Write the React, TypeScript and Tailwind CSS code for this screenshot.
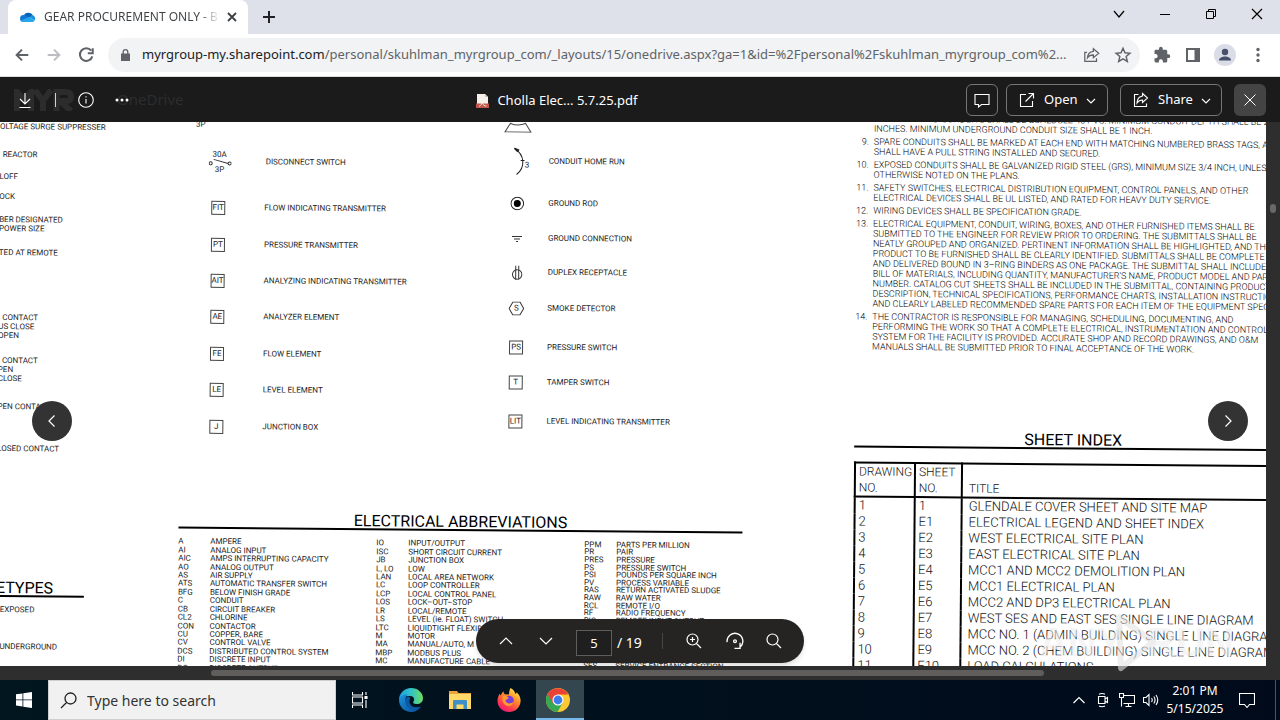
import React from "react";
import type { ReactNode } from "react";

type Mark = { text: string; gap: string };

const leftMarks: Mark[] = [
  { text: "OLTAGE SURGE SUPPRESSER", gap: "mt-0" },
  { text: "REACTOR", gap: "mt-[19px] pl-[3px]" },
  { text: "LOFF", gap: "mt-[13px]" },
  { text: "OCK", gap: "mt-[11px]" },
  { text: "BER DESIGNATED", gap: "mt-[14px]" },
  { text: "POWER SIZE", gap: "mt-0" },
  { text: "TED AT REMOTE", gap: "mt-[15px]" },
  { text: "CONTACT", gap: "mt-[56px] pl-[4px]" },
  { text: "US CLOSE", gap: "mt-0" },
  { text: "OPEN", gap: "mt-0" },
  { text: "CONTACT", gap: "mt-[16px] pl-[4px]" },
  { text: "PEN", gap: "mt-0" },
  { text: "CLOSE", gap: "mt-0" },
  { text: "PEN CONTACT", gap: "mt-[19px]" },
  { text: "LOSED CONTACT", gap: "mt-[33px]" },
];

const tagLegend: [string, string][] = [
  ["FIT", "FLOW INDICATING TRANSMITTER"],
  ["PT", "PRESSURE TRANSMITTER"],
  ["AIT", "ANALYZING INDICATING TRANSMITTER"],
  ["AE", "ANALYZER ELEMENT"],
  ["FE", "FLOW ELEMENT"],
  ["LE", "LEVEL ELEMENT"],
  ["J", "JUNCTION BOX"],
];

const abbreviations: [string, string][][] = [
  [
    ["A", "AMPERE"],
    ["AI", "ANALOG INPUT"],
    ["AIC", "AMPS INTERRUPTING CAPACITY"],
    ["AO", "ANALOG OUTPUT"],
    ["AS", "AIR SUPPLY"],
    ["ATS", "AUTOMATIC TRANSFER SWITCH"],
    ["BFG", "BELOW FINISH GRADE"],
    ["C", "CONDUIT"],
    ["CB", "CIRCUIT BREAKER"],
    ["CL2", "CHLORINE"],
    ["CON", "CONTACTOR"],
    ["CU", "COPPER, BARE"],
    ["CV", "CONTROL VALVE"],
    ["DCS", "DISTRIBUTED CONTROL SYSTEM"],
    ["DI", "DISCRETE INPUT"],
    ["DO", "DISCRETE OUTPUT"],
  ],
  [
    ["IO", "INPUT/OUTPUT"],
    ["ISC", "SHORT CIRCUIT CURRENT"],
    ["JB", "JUNCTION BOX"],
    ["L, LO", "LOW"],
    ["LAN", "LOCAL AREA NETWORK"],
    ["LC", "LOOP CONTROLLER"],
    ["LCP", "LOCAL CONTROL PANEL"],
    ["LOS", "LOCK–OUT–STOP"],
    ["LR", "LOCAL/REMOTE"],
    ["LS", "LEVEL (ie. FLOAT) SWITCH"],
    ["LTC", "LIQUIDTIGHT FLEXIBLE"],
    ["M", "MOTOR"],
    ["MA", "MANUAL/AUTO, M"],
    ["MBP", "MODBUS PLUS"],
    ["MC", "MANUFACTURE CABLE"],
    ["MCC", "MOTOR CONTROL CENTER"],
  ],
  [
    ["PPM", "PARTS PER MILLION"],
    ["PR", "PAIR"],
    ["PRES", "PRESSURE"],
    ["PS", "PRESSURE SWITCH"],
    ["PSI", "POUNDS PER SQUARE INCH"],
    ["PV", "PROCESS VARIABLE"],
    ["RAS", "RETURN ACTIVATED SLUDGE"],
    ["RAW", "RAW WATER"],
    ["RCL", "REMOTE I/O"],
    ["RF", "RADIO FREQUENCY"],
    ["RIO", "REMOTE INPUT OUTPUT"],
    ["", ""],
    ["", ""],
    ["", ""],
    ["", ""],
    ["", ""],
    ["SES", "SERVICE ENTRANCE SECTION"],
  ],
];

const notes: { no: string; lines: string[] }[] = [
  {
    no: "8.",
    lines: [
      "UNDERGROUND CONDUITS SHALL BE SCHEDULE 40 PVC. MINIMUM CONDUIT DEPTH SHALL BE 24",
      "INCHES. MINIMUM UNDERGROUND CONDUIT SIZE SHALL BE 1 INCH.",
    ],
  },
  {
    no: "9.",
    lines: [
      "SPARE CONDUITS SHALL BE MARKED AT EACH END WITH MATCHING NUMBERED BRASS TAGS, AND",
      "SHALL HAVE A PULL STRING INSTALLED AND SECURED.",
    ],
  },
  {
    no: "10.",
    lines: [
      "EXPOSED CONDUITS SHALL BE GALVANIZED RIGID STEEL (GRS), MINIMUM SIZE 3/4 INCH, UNLESS",
      "OTHERWISE NOTED ON THE PLANS.",
    ],
  },
  {
    no: "11.",
    lines: [
      "SAFETY SWITCHES, ELECTRICAL DISTRIBUTION EQUIPMENT, CONTROL PANELS, AND OTHER",
      "ELECTRICAL DEVICES SHALL BE UL LISTED, AND RATED FOR HEAVY DUTY SERVICE.",
    ],
  },
  { no: "12.", lines: ["WIRING DEVICES SHALL BE SPECIFICATION GRADE."] },
  {
    no: "13.",
    lines: [
      "ELECTRICAL EQUIPMENT, CONDUIT, WIRING, BOXES, AND OTHER FURNISHED ITEMS SHALL BE",
      "SUBMITTED TO THE ENGINEER FOR REVIEW PRIOR TO ORDERING. THE SUBMITTALS SHALL BE",
      "NEATLY GROUPED AND ORGANIZED. PERTINENT INFORMATION SHALL BE HIGHLIGHTED, AND THE",
      "PRODUCT TO BE FURNISHED SHALL BE CLEARLY IDENTIFIED. SUBMITTALS SHALL BE COMPLETE",
      "AND DELIVERED BOUND IN 3–RING BINDERS AS ONE PACKAGE. THE SUBMITTAL SHALL INCLUDE",
      "BILL OF MATERIALS, INCLUDING QUANTITY, MANUFACTURER'S NAME, PRODUCT MODEL AND PART",
      "NUMBER. CATALOG CUT SHEETS SHALL BE INCLUDED IN THE SUBMITTAL, CONTAINING PRODUCT",
      "DESCRIPTION, TECHNICAL SPECIFICATIONS, PERFORMANCE CHARTS, INSTALLATION INSTRUCTIONS,",
      "AND CLEARLY LABELED RECOMMENDED SPARE PARTS FOR EACH ITEM OF THE EQUIPMENT SPEC",
    ],
  },
  {
    no: "14.",
    lines: [
      "THE CONTRACTOR IS RESPONSIBLE FOR MANAGING, SCHEDULING, DOCUMENTING, AND",
      "PERFORMING THE WORK SO THAT A COMPLETE ELECTRICAL, INSTRUMENTATION AND CONTROL",
      "SYSTEM FOR THE FACILITY IS PROVIDED. ACCURATE SHOP AND RECORD DRAWINGS, AND O&M",
      "MANUALS SHALL BE SUBMITTED PRIOR TO FINAL ACCEPTANCE OF THE WORK.",
    ],
  },
];

const sheets: [string, string, string][] = [
  ["1", "1", "GLENDALE COVER SHEET AND SITE MAP"],
  ["2", "E1", "ELECTRICAL LEGEND AND SHEET INDEX"],
  ["3", "E2", "WEST ELECTRICAL SITE PLAN"],
  ["4", "E3", "EAST ELECTRICAL SITE PLAN"],
  ["5", "E4", "MCC1 AND MCC2 DEMOLITION PLAN"],
  ["6", "E5", "MCC1 ELECTRICAL PLAN"],
  ["7", "E6", "MCC2 AND DP3 ELECTRICAL PLAN"],
  ["8", "E7", "WEST SES AND EAST SES SINGLE LINE DIAGRAM"],
  ["9", "E8", "MCC NO. 1 (ADMIN BUILDING) SINGLE LINE DIAGRAM"],
  ["10", "E9", "MCC NO. 2 (CHEM BUILDING) SINGLE LINE DIAGRAM"],
  ["11", "E10", "LOAD CALCULATIONS"],
];

function CloudLogo() {
  return (
    <svg className="h-[11px] w-4 shrink-0" viewBox="0 1 16 11" aria-hidden="true">
      <path d="M4 4.2A5 5 0 0 1 12.6 4L8.5 7.5z" fill="#0364b8" />
      <path d="M3.6 4a3.6 3.6 0 0 1 2.4.6L10 7 3.5 11A3.5 3.5 0 0 1 3.6 4z" fill="#0f78d4" />
      <path d="M9.5 6.2 12.4 4A3.5 3.5 0 0 1 14.7 9z" fill="#1490df" />
      <path d="M1 9.6 9 6.1l6 3a3 3 0 0 1-2.3 1.9H3.5A3.6 3.6 0 0 1 1 9.6z" fill="#28a8ea" />
    </svg>
  );
}

function Line({ d, size, width = 1, box = 16 }: { d: string; size: string; width?: number; box?: number }) {
  return (
    <svg
      className={size}
      viewBox={`0 0 ${box} ${box}`}
      fill="none"
      stroke="currentColor"
      strokeWidth={width}
      aria-hidden="true"
    >
      <path d={d} />
    </svg>
  );
}

function TabStrip() {
  return (
    <div className="flex h-[34px] shrink-0 items-start justify-between bg-[#dee1e9] pl-2 text-[#202124]">
      <div className="flex h-full items-center">
        <div className="flex h-full w-[240px] items-center rounded-t-lg bg-white pl-3">
          <CloudLogo />
          <span className="ml-2 w-[176px] overflow-hidden bg-gradient-to-r from-[#3c4043] from-88% to-transparent bg-clip-text text-[12px] whitespace-nowrap text-transparent">
            GEAR PROCUREMENT ONLY - BU
          </span>
          <button aria-label="Close tab" className="ml-1 text-[#3c4043]">
            <Line d="M4 4l8 8M12 4l-8 8" size="size-4" width={1.8} />
          </button>
        </div>
        <button aria-label="New tab" className="ml-[13px]">
          <Line d="M8 2v12M2 8h12" size="size-4" width={2} />
        </button>
      </div>
      <div className="flex h-7 items-center text-black">
        <button aria-label="Search tabs" className="flex w-[46px] justify-center">
          <Line d="M3 5l5 6 5-6" size="size-4" width={1.2} />
        </button>
        <button aria-label="Minimize" className="flex w-[46px] justify-center">
          <Line d="M3 8.5h10" size="size-4" />
        </button>
        <button aria-label="Restore" className="flex w-[46px] justify-center">
          <Line d="M3.5 5.5h7v7h-7zM5.5 5.5v-2h7v7h-2" size="size-4" />
        </button>
        <button aria-label="Close window" className="flex w-[46px] justify-center">
          <Line d="M3 3l10 10M13 3L3 13" size="size-4" width={1.2} />
        </button>
      </div>
    </div>
  );
}

function AddressBar() {
  return (
    <div className="flex h-[43px] shrink-0 items-center border-b border-[#dadce0] bg-white pr-[13px] pl-[13px] text-[#5f6368]">
      <button aria-label="Back">
        <Line d="M17 10H4M10 4l-6 6 6 6" size="size-[18px]" width={2.2} box={20} />
      </button>
      <button aria-label="Forward" className="ml-[14px] text-[#bcbec1]">
        <Line d="M3 10h13M10 4l6 6-6 6" size="size-[18px]" width={2.2} box={20} />
      </button>
      <button aria-label="Reload" className="ml-[14px]">
        <Line d="M15.8 5.2A7 7 0 1 0 17 11.5M17.5 2.5v5.5H12" size="size-[18px]" width={2.2} box={20} />
      </button>
      <div className="ml-[13px] flex h-[34px] min-w-0 flex-1 items-center rounded-full bg-[#f1f3f4] pr-2 pl-[13px]">
        <svg className="h-3 w-[9px] shrink-0" viewBox="0 0 9 12" aria-hidden="true">
          <path d="M0 4.5h9V12H0z" fill="#5f6368" />
          <path d="M2.2 5V3a2.3 2.3 0 0 1 4.6 0v2" fill="none" stroke="#5f6368" strokeWidth="1.3" />
        </svg>
        <div className="ml-[12px] min-w-0 flex-1 overflow-hidden text-[13px] whitespace-nowrap">
          <span className="text-[#202124]">myrgroup-my.sharepoint.com</span>
          /personal/skuhlman_myrgroup_com/_layouts/15/onedrive.aspx?ga=1&amp;id=%2Fpersonal%2Fskuhlman_myrgroup_com%2...
        </div>
        <button aria-label="Share this page" className="ml-[10px]">
          <Line
            d="M4.5 7H2v10h13v-3.5M11.5 3l6 5-6 5v-3c-3 0-5 .8-6.5 3 .3-4 2.5-6.5 6.5-7z"
            size="size-[18px]"
            width={1.4}
            box={20}
          />
        </button>
        <button aria-label="Bookmark" className="ml-[13px]">
          <Line
            d="M10 2.5l2.2 5.1 5.5.5-4.2 3.6 1.3 5.4L10 14.2l-4.8 2.9 1.3-5.4L2.3 8.1l5.5-.5z"
            size="size-[18px]"
            width={1.6}
            box={20}
          />
        </button>
      </div>
      <button aria-label="Extensions" className="ml-[13px]">
        <svg className="size-[18px]" viewBox="0 0 24 24" fill="currentColor" aria-hidden="true">
          <path d="M20.5 11H19V7c0-1.100-.9-2-2-2h-4V3.500a2.500 2.500 0 0 0-5 0V5H4c-1.100 0-2 .9-2 2v3.800h1.500a2.700 2.700 0 0 1 0 5.400H2V20c0 1.100.9 2 2 2h3.800v-1.500a2.700 2.700 0 0 1 5.400 0V22H17c1.100 0 2-.9 2-2v-4h1.500a2.500 2.500 0 0 0 0-5z" />
        </svg>
      </button>
      <button aria-label="Side panel" className="ml-[15px]">
        <svg className="size-[14px]" viewBox="0 0 14 14" aria-hidden="true">
          <path d="M1 1h12v12H1z" fill="none" stroke="#5f6368" strokeWidth="2" />
          <path d="M8.500 1H13v12H8.500z" fill="#5f6368" />
        </svg>
      </button>
      <button aria-label="Profile" className="ml-[14px]">
        <svg className="size-[22px]" viewBox="0 0 22 22" aria-hidden="true">
          <circle cx="11" cy="11" r="11" fill="#dadce8" />
          <circle cx="11" cy="8" r="3.2" fill="#474f6b" />
          <path d="M5 16.500c0-3 3.500-4 6-4s6 1 6 4z" fill="#474f6b" />
        </svg>
      </button>
      <button aria-label="Menu" className="ml-[13px]">
        <svg className="size-[18px]" viewBox="0 0 18 18" fill="currentColor" aria-hidden="true">
          <circle cx="9" cy="3.5" r="1.7" />
          <circle cx="9" cy="9" r="1.7" />
          <circle cx="9" cy="14.5" r="1.7" />
        </svg>
      </button>
    </div>
  );
}

function ViewerHeader() {
  return (
    <header className="relative grid h-[45px] shrink-0 grid-cols-[37%_auto_1fr] items-center bg-[#1b1b1b] pr-[14px] text-white">
      <div
        className="pointer-events-none absolute inset-y-0 left-[14px] flex items-center gap-[43px] text-[#2d2d2d]"
        aria-hidden="true"
      >
        <svg className="h-[22px] w-[60px]" viewBox="0 0 60 22" fill="none" stroke="#2c2c2c" strokeWidth="6">
          <path d="M3 22V3l7 8 7-8v19M21 1l8 11 8-11M29 11v11M42.500 22V3H52q5 0 5 4.500T52 12h-6l11 10" />
        </svg>
        <span className="text-[15px]">OneDrive</span>
      </div>
      <div className="relative flex items-center pl-[17px]">
        <button aria-label="Download">
          <Line d="M8 1v11M3 7l5 5 5-5M2.5 15.5h11" size="size-4" width={1.1} />
        </button>
        <span className="ml-[22px] h-[14px] w-px bg-[#d0d0d0]" />
        <button aria-label="Details" className="ml-[22px]">
          <Line
            d="M8 .7a7.3 7.3 0 1 0 0 14.6A7.3 7.3 0 0 0 8 .7M8 7v4.5M8 4.3v1.2"
            size="size-4"
            width={1.1}
          />
        </button>
        <button aria-label="More actions" className="ml-[20px]">
          <svg className="size-4" viewBox="0 0 16 16" fill="currentColor" aria-hidden="true">
            <circle cx="3" cy="8" r="1.5" />
            <circle cx="8" cy="8" r="1.5" />
            <circle cx="13" cy="8" r="1.5" />
          </svg>
        </button>
      </div>
      <h1 className="flex items-center gap-2 pt-[3px] pl-[8px] text-[13px]">
        <svg className="h-[15px] w-[13px]" viewBox="0 0 13 15" aria-hidden="true">
          <path d="M1 0h8l3 3v11H1z" fill="#f7efe9" />
          <path d="M9 0l3 3H9z" fill="#c9bfb8" />
          <path d="M0 9.500h13V14H0z" fill="#c0564a" />
          <path d="M3 12.500c2-1 3.500-3 3-5.500M6 9c1 2 2.500 3 4.500 3" stroke="#fbe9e4" fill="none" strokeWidth=".9" />
        </svg>
        Cholla Elec... 5.7.25.pdf
      </h1>
      <div className="flex items-center justify-end text-[13px]">
        <button
          aria-label="Comments"
          className="flex h-8 w-8 items-center justify-center rounded-md border border-[#767676]"
        >
          <Line d="M1 2.5h14v10H7.5L4.5 15v-2.500H1z" size="size-4" width={1.1} />
        </button>
        <button className="ml-2 flex h-8 w-[102px] items-center rounded-md border border-[#767676] pl-3">
          <Line d="M7 2.5H1.5v12h12V9M9.5 1.5h5v5M14.5 1.5L6.5 9.5" size="size-4" width={1.1} />
          <span className="mr-2 ml-[9px]">Open</span>
          <Line d="M1 4l4 4 4-4" size="size-[10px]" width={1.1} box={10} />
        </button>
        <button className="ml-3 flex h-8 w-[102px] items-center rounded-md border border-[#767676] pl-3">
          <Line
            d="M5.5 2.5h-4v12h12v-3M9.5 1.5l5 4.5-5 4.5V8C7 8 5.5 8.800 4 11c.2-4 2.500-6.500 5.500-7z"
            size="size-4"
            width={1.1}
          />
          <span className="mr-2 ml-[9px]">Share</span>
          <Line d="M1 4l4 4 4-4" size="size-[10px]" width={1.1} box={10} />
        </button>
        <button
          aria-label="Close viewer"
          className="ml-3 flex h-8 w-8 items-center justify-center rounded-md bg-[#444444]"
        >
          <Line d="M2.5 2.5l11 11M13.5 2.5l-11 11" size="size-4" width={1} />
        </button>
      </div>
    </header>
  );
}

function Tag({ children }: { children: ReactNode }) {
  return (
    <span className="flex h-[14px] w-[14px] items-center justify-center border border-[#444] leading-none">
      {children}
    </span>
  );
}

function Symbol({ gap, icon, label }: { gap: string; icon: ReactNode; label: string }) {
  return (
    <li className={`flex h-[22px] items-center ${gap}`}>
      <span className="flex w-7 justify-center">{icon}</span>
      <span className="ml-[17px]">{label}</span>
    </li>
  );
}

function Legend() {
  return (
    <div className="flex h-[385px]">
      <div className="w-[322px]">
        <div className="-mt-1 pl-[14px] leading-[9px]">3P</div>
        <div className="mt-[15px] flex h-9 items-center pl-[27px]">
          <div className="flex w-[22px] flex-col items-center leading-[9px]">
            <span className="leading-[8px]">30A</span>
            <svg
              className="h-[7px] w-[23px] shrink-0"
              viewBox="0 0 23 7"
              fill="none"
              stroke="#333"
              strokeWidth="1"
              aria-hidden="true"
            >
              <circle cx="2" cy="4.5" r="1.6" />
              <circle cx="21" cy="4.5" r="1.6" />
              <path d="M5 .5l14.5 4" />
            </svg>
            <span className="leading-[8px]">3P</span>
          </div>
          <span className="ml-[35px]">DISCONNECT SWITCH</span>
        </div>
        <ul className="mt-[10px] grid h-[255px] grid-rows-7">
          {tagLegend.map(([tag, label]) => (
            <li key={tag} className="flex items-center pl-[30px]">
              <Tag>{tag}</Tag>
              <span className="ml-[39px]">{label}</span>
            </li>
          ))}
        </ul>
      </div>
      <ul>
        <li className="flex h-[5px] w-7 justify-center">
          <svg className="-mt-1 h-[10px] w-7" viewBox="0 0 28 10" fill="none" stroke="#444" aria-hidden="true">
            <path d="M7 0L1 9.500h26L21 0M6.500 1q7.500 3 15 0" />
          </svg>
        </li>
        <Symbol
          gap="mt-[19px]"
          label="CONDUIT HOME RUN"
          icon={
            <span className="flex items-center pl-2">
              <svg className="h-7 w-[11px]" viewBox="0 0 11 28" fill="none" stroke="#222" aria-hidden="true">
                <path d="M1 1.500C11 7 12 20 3 27M7 13h4" />
                <path d="M.5.5l4.500 1.800-1.500 1.600z" fill="#111" />
              </svg>
              <span className="pt-2">3</span>
            </span>
          }
        />
        <Symbol
          gap="mt-[20px]"
          label="GROUND ROD"
          icon={
            <svg className="size-[14px]" viewBox="0 0 14 14" aria-hidden="true">
              <circle cx="7" cy="7" r="6.3" fill="none" stroke="#222" />
              <circle cx="7" cy="7" r="3.5" fill="#000" />
            </svg>
          }
        />
        <Symbol
          gap="mt-[13px]"
          label="GROUND CONNECTION"
          icon={
            <svg className="h-[7px] w-[10px]" viewBox="0 0 10 7" stroke="#333" aria-hidden="true">
              <path d="M0 1h10M2 3.500h6M4 6h2" />
            </svg>
          }
        />
        <Symbol
          gap="mt-[12px]"
          label="DUPLEX RECEPTACLE"
          icon={
            <svg className="h-[15px] w-[11px]" viewBox="0 0 11 15" fill="none" stroke="#333" aria-hidden="true">
              <circle cx="5.5" cy="9" r="4.7" />
              <path d="M4 0v14M7 0v14" />
            </svg>
          }
        />
        <Symbol
          gap="mt-[14px]"
          label="SMOKE DETECTOR"
          icon={
            <span className="flex h-[14px] w-4 items-center justify-center">
              <svg className="absolute h-[14px] w-4" viewBox="0 0 16 14" fill="none" stroke="#333" aria-hidden="true">
                <path d="M4.500.5h7L15.300 7l-3.800 6.500h-7L.7 7z" />
              </svg>
              S
            </span>
          }
        />
        <Symbol gap="mt-[17px]" label="PRESSURE SWITCH" icon={<Tag>PS</Tag>} />
        <Symbol gap="mt-[13px]" label="TAMPER SWITCH" icon={<Tag>T</Tag>} />
        <Symbol gap="mt-[17px]" label="LEVEL INDICATING TRANSMITTER" icon={<Tag>LIT</Tag>} />
      </ul>
    </div>
  );
}

function Abbreviations() {
  return (
    <section className="w-[564px]">
      <h2 className="border-b-2 border-black pt-1 text-center text-[16px] leading-[14px] font-normal text-black">
        ELECTRICAL ABBREVIATIONS
      </h2>
      <div className="mt-[9px] grid grid-cols-[198px_208px_158px] items-start leading-[8px]">
        {abbreviations.map((column, i) => (
          <dl key={i} className={i === 2 ? "grid h-[129px] auto-rows-fr" : "grid h-[135px] auto-rows-fr"}>
            {column.map(([abbr, meaning], j) => (
              <div key={j} className="flex items-center">
                <dt className="w-8 shrink-0">{abbr}</dt>
                <dd>{meaning}</dd>
              </div>
            ))}
          </dl>
        ))}
      </div>
    </section>
  );
}

function Notes() {
  return (
    <ol className="-mt-4 flex h-[314px] flex-col gap-[3px] text-[9px] leading-[10px] font-light text-black">
      {notes.map((note) => (
        <li key={note.no} className="flex">
          <span className="w-[17px] shrink-0 text-right">{note.no}</span>
          <span className="ml-[5px]">
            {note.lines.map((line) => (
              <span key={line} className="block">
                {line}
              </span>
            ))}
          </span>
        </li>
      ))}
    </ol>
  );
}

function SheetIndex() {
  return (
    <section className="ml-[5px] text-black">
      <h2 className="border-b-2 border-black pt-1 pl-[170px] text-[16px] leading-[14px] font-normal">SHEET INDEX</h2>
      <table className="mt-[14px] w-full table-fixed border-collapse text-[13px] leading-4 font-light text-[#111]">
        <thead>
          <tr className="border-2 border-black text-left text-[12px] whitespace-normal">
            <th scope="col" className="w-[60px] border-2 border-black pl-[3px] font-light">
              DRAWING NO.
            </th>
            <th scope="col" className="w-[47px] border-2 border-black pl-[3px] font-light">
              SHEET NO.
            </th>
            <th scope="col" className="pl-[6px] align-bottom font-light">
              TITLE
            </th>
          </tr>
        </thead>
        <tbody>
          {sheets.map(([no, sheet, title]) => (
            <tr key={no} className="border-l-2 border-black">
              <td className="border-r-2 border-black pl-[3px]">{no}</td>
              <td className="border-r-2 border-black pl-[3px]">{sheet}</td>
              <td className="pl-[6px]">{title}</td>
            </tr>
          ))}
        </tbody>
      </table>
    </section>
  );
}

function DrawingSheet() {
  return (
    <article className="grid w-[104%] origin-top-left rotate-[0.5deg] grid-cols-[182px_670px_1fr] font-['Roboto',sans-serif] text-[8px] font-normal whitespace-nowrap text-[#222]">
      <div className="leading-[9px]">
        {leftMarks.map((mark, i) => (
          <div key={i} className={mark.gap}>
            {mark.text}
          </div>
        ))}
        <h2 className="mt-[124px] w-[88px] border-b-2 border-black pt-1 text-[16px] leading-[14px] font-normal text-black">
          ETYPES
        </h2>
        <div className="mt-[8px] pl-1">EXPOSED</div>
        <div className="mt-[28px] pl-1">UNDERGROUND</div>
      </div>
      <div>
        <Legend />
        <Abbreviations />
      </div>
      <div>
        <Notes />
        <SheetIndex />
      </div>
    </article>
  );
}

function PageControls() {
  return (
    <div className="absolute bottom-[17px] left-1/2 flex h-11 w-[328px] -translate-x-1/2 items-center rounded-full bg-[#252423] pl-[22px] text-white shadow-md">
      <button aria-label="Previous page">
        <Line d="M2 11l6-6 6 6" size="size-4" width={1.2} />
      </button>
      <button aria-label="Next page" className="ml-6">
        <Line d="M2 5l6 6 6-6" size="size-4" width={1.2} />
      </button>
      <input
        aria-label="Page number"
        defaultValue="5"
        className="mt-1 ml-[22px] h-[26px] w-9 border border-[#605e5c] bg-[#1f1f1f] text-center text-[13px]"
      />
      <span className="mt-[3px] ml-[5px] text-[14px]">/ 19</span>
      <span className="ml-[20px] h-4 w-px bg-[#484644]" />
      <button aria-label="Zoom in" className="ml-[23px]">
        <Line
          d="M6.5 1a5.5 5.5 0 1 0 0 11 5.5 5.5 0 0 0 0-11M10.5 10.5L15 15M6.5 4v5M4 6.5h5"
          size="size-4"
          width={1.2}
        />
      </button>
      <button aria-label="Rotate" className="ml-6">
        <Line
          d="M1 9a7 7 0 1 1 11.5 4.5M12.5 9.5v5h-5M8 7a1.2 1.2 0 1 0 0 2.4A1.2 1.2 0 0 0 8 7"
          size="size-[18px]"
          width={1.2}
        />
      </button>
      <button aria-label="Find" className="ml-[22px]">
        <Line d="M6.5 1a5.5 5.5 0 1 0 0 11 5.5 5.5 0 0 0 0-11M10.5 10.5L15 15" size="size-4" width={1.2} />
      </button>
    </div>
  );
}

function Watermark() {
  return (
    <div className="pointer-events-none absolute right-[46px] bottom-2 z-10 flex items-center font-['Liberation_Sans'] text-[40px] leading-[56px] font-bold text-[#efefef]/60">
      <span>ANY</span>
      <svg
        className="-mx-3 h-[60px] w-[48px]"
        viewBox="0 0 48 60"
        fill="none"
        stroke="#e2e2e2"
        strokeOpacity=".6"
        strokeWidth="6"
        strokeLinejoin="round"
        aria-hidden="true"
      >
        <path d="M8 5l34 25-32 26z" />
      </svg>
      <span>RUN</span>
    </div>
  );
}

function Viewer() {
  return (
    <main className="relative flex min-h-0 flex-1 flex-col bg-[#2e2e2e]">
      <div className="flex min-h-0 flex-1">
        <div className="relative min-w-0 flex-1 overflow-hidden bg-white">
          <DrawingSheet />
        </div>
        <div className="w-[14px] shrink-0 pt-[82px] pl-1">
          <div className="h-[9px] w-[6px] rounded-sm bg-[#686868]" />
        </div>
      </div>
      <div className="h-[14px] shrink-0 pt-1 pr-[236px] pl-[211px]">
        <div className="h-[6px] rounded-full bg-[#605e5c]" />
      </div>
      <button
        aria-label="Previous file"
        className="absolute top-[279px] left-8 flex size-10 items-center justify-center rounded-full bg-[#333333] text-white"
      >
        <Line d="M10.5 2.5L5 8l5.5 5.5" size="size-4" width={1.2} />
      </button>
      <button
        aria-label="Next file"
        className="absolute top-[279px] right-8 flex size-10 items-center justify-center rounded-full bg-[#333333] text-white"
      >
        <Line d="M5.5 2.5L11 8l-5.5 5.5" size="size-4" width={1.2} />
      </button>
      <PageControls />
      <Watermark />
    </main>
  );
}

function Taskbar() {
  return (
    <footer className="flex h-10 shrink-0 items-stretch bg-gradient-to-r from-[#01161f] via-[#01101d] to-[#000a1b] text-white">
      <button aria-label="Start" className="flex w-12 items-center justify-center">
        <svg className="size-4" viewBox="0 0 16 16" fill="#fff" aria-hidden="true">
          <path d="M0 2.300L6.500 1.400V7.500H0zM7.300 1.300L16 0v7.500H7.300zM0 8.300h6.500v6.100L0 13.600zM7.300 8.300H16V16l-8.700-1.200z" />
        </svg>
      </button>
      <label className="flex w-72 items-center border border-[#d0d0d0] bg-[#f1f1f1] pl-[11px] text-[#222]">
        <Line
          d="M10.5 1a5.5 5.5 0 1 0 0 11 5.5 5.5 0 0 0 0-11M6.5 10.5L1 16"
          size="size-[17px]"
          width={1.3}
          box={17}
        />
        <input
          aria-label="Search"
          placeholder="Type here to search"
          className="ml-[10px] min-w-0 flex-1 bg-transparent text-[14px] placeholder:text-[#333]"
        />
      </label>
      <button aria-label="Task view" className="flex w-12 items-center justify-center">
        <svg className="size-4" viewBox="0 0 16 16" fill="none" stroke="#fff" strokeWidth="1.1" aria-hidden="true">
          <path d="M.5 0v3h10V0M.5 16v-3h10v3M.5 5h10v6H.5zM14 0v3M14 8v8" />
          <path d="M13 4.500h2v2h-2z" fill="#fff" />
        </svg>
      </button>
      <button aria-label="Microsoft Edge" className="flex w-[54px] items-center justify-center">
        <svg className="size-6" viewBox="0 0 24 24" aria-hidden="true">
          <defs>
            <linearGradient id="edgeTop" x1="0" y1="0.5" x2="1" y2="0.5">
              <stop offset="0" stopColor="#1e9de0" />
              <stop offset=".5" stopColor="#32c3c8" />
              <stop offset="1" stopColor="#6be05e" />
            </linearGradient>
            <linearGradient id="edgeLow" x1="0" y1="0" x2="1" y2="1">
              <stop offset="0" stopColor="#1a94dc" />
              <stop offset="1" stopColor="#0b4a94" />
            </linearGradient>
          </defs>
          <path
            d="M0 12C0 5 5.500 0 12 0c7 0 12 5 12 10 0 4-3 6-6 6-3.500 0-4.500-1.500-3.500-2.500 1.500-2 .5-5.500-3.500-5.500C6 8 1 9.500 0 12z"
            fill="url(#edgeTop)"
          />
          <path
            d="M0 12c.5-3.500 4.500-6 8.500-5.500C6 9 6 13 8 16c2.500 4 8 5.500 14 2.500C20 22 16 24 12 24 5.500 24 0 19 0 12z"
            fill="url(#edgeLow)"
          />
          <path
            d="M8.500 8.500c-3 2.500-3 8 .5 11 3 2.500 9 2 13-1-5.500 2-10.500.5-11.500-4-.4-2 .3-4 1-4.500-.5-1-2-1.500-3-1.500z"
            fill="#0c59a4"
          />
        </svg>
      </button>
      <button aria-label="File Explorer" className="flex w-11 items-center justify-center">
        <svg className="h-5 w-[22px]" viewBox="0 0 22 20" aria-hidden="true">
          <path d="M0 1h8l1.500 2H22v16H0z" fill="#e8a33d" />
          <path d="M0 4h22v15H0z" fill="#ffd869" />
          <path d="M4 11q0-1 1-1h12q1 0 1 1v8h-3.500v-4.500h-7V19H4z" fill="#3f8fc8" />
        </svg>
      </button>
      <button aria-label="Firefox" className="flex w-[54px] items-center justify-center">
        <svg className="size-6" viewBox="0 0 24 24" aria-hidden="true">
          <defs>
            <linearGradient id="fox" x1="0.8" y1="0" x2="0.2" y2="1">
              <stop offset="0" stopColor="#fff14f" />
              <stop offset=".4" stopColor="#ff8a2a" />
              <stop offset=".75" stopColor="#ff3750" />
              <stop offset="1" stopColor="#e31587" />
            </linearGradient>
          </defs>
          <path
            d="M13.500 0c3 1.500 4.500 4 5 6 .8-.4 1-1 1-1.800C22.500 7 24 10 23.500 14 22.800 20 18 24 12 24S.5 19.500.5 13c0-3 1-5.500 2.500-7.500 0 1 .2 1.500.5 2C4.500 5.500 5.500 4 6.500 3.200c0 1.500.5 2.300 1.500 3L12 6.500C12 4 12.500 2 13.500 0z"
            fill="url(#fox)"
          />
          <circle cx="12" cy="12.5" r="4.8" fill="#7a3fd8" />
          <path
            d="M6 8c2-.5 4 .2 5.500 1.500 0 1.500-1.500 1.800-3 2.500 0 3.500 5 5 8 1.500C16 18 12 19 9 17.500 5.500 16 4.500 11 6 8z"
            fill="#ff9a2e"
          />
        </svg>
      </button>
      <button
        aria-label="Google Chrome"
        className="flex w-12 items-center justify-center border-b-2 border-[#76b9ed] bg-[#34464f]"
      >
        <svg className="mt-[2px] mr-1 size-6" viewBox="0 0 24 24" aria-hidden="true">
          <circle cx="12" cy="12" r="12" fill="#fcc934" />
          <path d="M1.600 6A12 12 0 0 0 11.500 24l5.200-9.300L12 12z" fill="#34a853" />
          <path d="M1.600 6l5.200 9 5-3V6.500h10.600A12 12 0 0 0 1.600 6z" fill="#ea4335" />
          <circle cx="12" cy="12" r="5.5" fill="#fff" />
          <circle cx="12" cy="12" r="4.4" fill="#3b7ded" />
        </svg>
      </button>
      <div className="flex flex-1 items-center justify-end">
        <button aria-label="Show hidden icons">
          <Line d="M2.5 11L8 5.5l5.5 5.5" size="size-4" width={1.2} />
        </button>
        <button aria-label="Meet now" className="ml-2">
          <Line
            d="M3.5 4.5h6.5v7H3.5zM10 7l2.5-1.5v5L10 9M4 2.2q3-1.5 6 0M4 14q3 1.5 6 0"
            size="size-4"
            width={1.1}
          />
        </button>
        <button aria-label="Network" className="ml-2">
          <Line
            d="M5 3.5h10.5v8H4.5M.5 1.5h4v4h-4zM2.5 5.5v9M6.5 14.5h6M9.5 11.5v3"
            size="size-4"
            width={1.1}
          />
        </button>
        <button aria-label="Volume" className="ml-2">
          <Line
            d="M.5 5.5h2.500l3-3v11l-3-3H.5zM8.500 6q1.500 2 0 4M10.800 4.500q2.500 3.500 0 7M13 3q3.500 5 0 10"
            size="size-4"
            width={1.1}
          />
        </button>
        <div className="ml-[6px] w-[60px] text-center text-[12px] leading-[18px] whitespace-nowrap">
          <div>2:01 PM</div>
          <div>5/15/2025</div>
        </div>
        <button aria-label="Notifications" className="ml-[14px]">
          <Line d="M.5 1.5h15v11h-5l-2.500 3-2.500-3h-5z" size="size-4" width={1.1} />
        </button>
        <span className="ml-5 h-full w-px bg-[#4a5560]" />
        <span className="w-1" />
      </div>
    </footer>
  );
}

export default function App() {
  return (
    <div className="flex h-screen flex-col overflow-hidden font-['Noto_Sans',sans-serif]">
      <TabStrip />
      <AddressBar />
      <ViewerHeader />
      <Viewer />
      <Taskbar />
    </div>
  );
}
